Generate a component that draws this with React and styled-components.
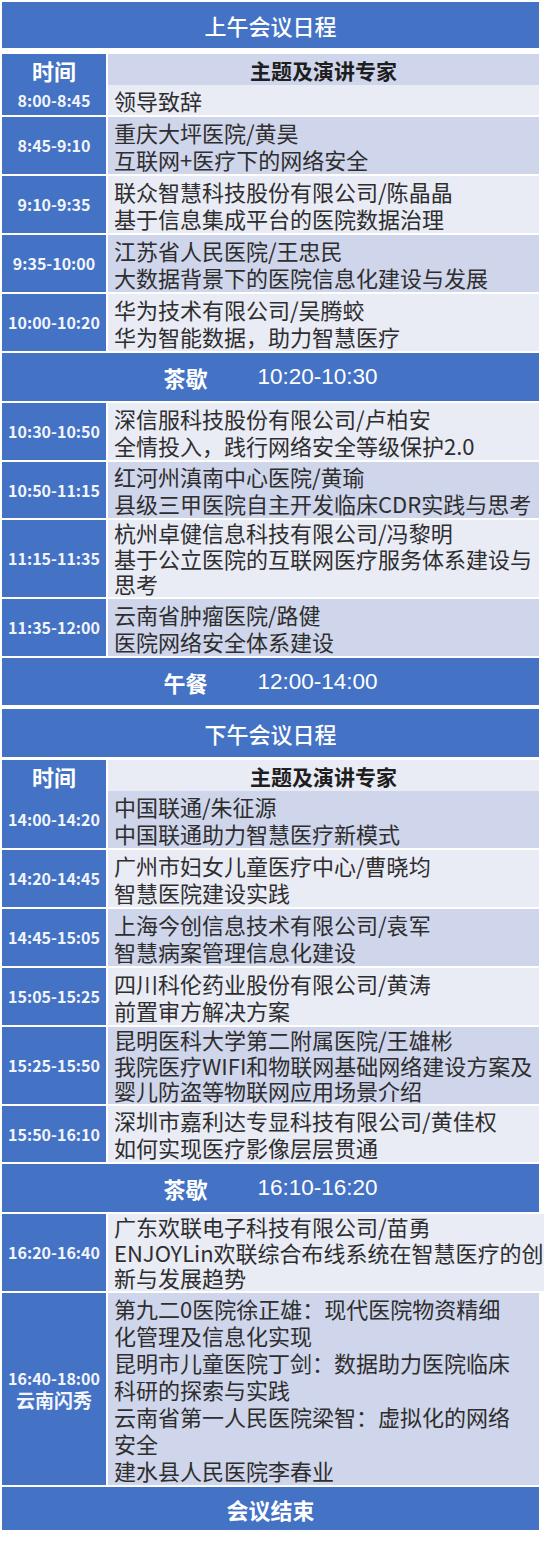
import React from 'react';
import styled, { createGlobalStyle } from 'styled-components';

const GlobalStyle = createGlobalStyle`
   html, body {
      margin: 0;
      padding: 0;
      background: #ffffff;
   }
   body {
      font-family: "Noto Sans CJK SC", "Liberation Sans", sans-serif;
   }
`;

const BLUE = '#4472c4';

const morning = [
   { time: '8:00-8:45', lines: ['领导致辞'], h: 30 },
   { time: '8:45-9:10', lines: ['重庆大坪医院/黄昊', '互联网+医疗下的网络安全'], h: 57, dark: true },
   { time: '9:10-9:35', lines: ['联众智慧科技股份有限公司/陈晶晶', '基于信息集成平台的医院数据治理'], h: 57 },
   { time: '9:35-10:00', lines: ['江苏省人民医院/王忠民', '大数据背景下的医院信息化建设与发展'], h: 57, dark: true },
   { time: '10:00-10:20', lines: ['华为技术有限公司/吴腾蛟', '华为智能数据，助力智慧医疗'], h: 57 },
];

const lateMorning = [
   { time: '10:30-10:50', lines: ['深信服科技股份有限公司/卢柏安', '全情投入，践行网络安全等级保护2.0'], h: 57 },
   { time: '10:50-11:15', lines: ['红河州滇南中心医院/黄瑜', '县级三甲医院自主开发临床CDR实践与思考'], h: 56, dark: true },
   { time: '11:15-11:35', lines: ['杭州卓健信息科技有限公司/冯黎明', '基于公立医院的互联网医疗服务体系建设与', '思考'], h: 77 },
   { time: '11:35-12:00', lines: ['云南省肿瘤医院/路健', '医院网络安全体系建设'], h: 57, dark: true },
];

const afternoon = [
   { time: '14:00-14:20', lines: ['中国联通/朱征源', '中国联通助力智慧医疗新模式'], h: 57, dark: true },
   { time: '14:20-14:45', lines: ['广州市妇女儿童医疗中心/曹晓均', '智慧医院建设实践'], h: 57 },
   { time: '14:45-15:05', lines: ['上海今创信息技术有限公司/袁军', '智慧病案管理信息化建设'], h: 57, dark: true },
   { time: '15:05-15:25', lines: ['四川科伦药业股份有限公司/黄涛', '前置审方解决方案'], h: 57 },
   {
      time: '15:25-15:50',
      lines: ['昆明医科大学第二附属医院/王雄彬', '我院医疗WIFI和物联网基础网络建设方案及', '婴儿防盗等物联网应用场景介绍'],
      h: 77,
      dark: true,
   },
   { time: '15:50-16:10', lines: ['深圳市嘉利达专显科技有限公司/黄佳权', '如何实现医疗影像层层贯通'], h: 56 },
];

const lateAfternoon = [
   {
      time: '16:20-16:40',
      lines: ['广东欢联电子科技有限公司/苗勇', 'ENJOYLin欢联综合布线系统在智慧医疗的创', '新与发展趋势'],
      h: 77,
   },
   {
      time: '16:40-18:00',
      sub: '云南闪秀',
      lines: [
         '第九二0医院徐正雄：现代医院物资精细',
         '化管理及信息化实现',
         '昆明市儿童医院丁剑：数据助力医院临床',
         '科研的探索与实践',
         '云南省第一人民医院梁智：虚拟化的网络',
         '安全',
         '建水县人民医院李春业',
      ],
      h: 192,
      dark: true,
   },
];

// three-line rows are packed a bit tighter than the others
const lineHeight = (item) => (item.lines.length === 3 ? 25.5 : 27);

const ScheduleRow = ({ item }) => (
   <Row $h={item.h}>
      <TimeCell>
         <span>{item.time}</span>
         {item.sub && <TimeSub>{item.sub}</TimeSub>}
      </TimeCell>
      <TopicCell $dark={item.dark} $lh={lineHeight(item)}>
         {item.lines.map((line) => (
            <Line key={line}>{line}</Line>
         ))}
      </TopicCell>
   </Row>
);

const HeaderRow = ({ dark, mt }) => (
   <Row $h={29} $mt={mt}>
      <HeadTime>时间</HeadTime>
      <HeadTopic $dark={dark}>主题及演讲专家</HeadTopic>
   </Row>
);

const App = () => (
   <>
      <GlobalStyle />
      <Page>
         <Band $h={46} $mt={0}>
            <BandTitle>上午会议日程</BandTitle>
         </Band>
         <HeaderRow dark mt={6} />
         {morning.map((item) => (
            <ScheduleRow key={item.time} item={item} />
         ))}
         <Band $h={48}>
            <BreakName>茶歇</BreakName>
            <BreakTime>10:20-10:30</BreakTime>
         </Band>
         {lateMorning.map((item) => (
            <ScheduleRow key={item.time} item={item} />
         ))}
         <Band $h={47}>
            <BreakName>午餐</BreakName>
            <BreakTime>12:00-14:00</BreakTime>
         </Band>
         <Band $h={48} $mt={4}>
            <BandTitle>下午会议日程</BandTitle>
         </Band>
         <HeaderRow mt={3} />
         {afternoon.map((item) => (
            <ScheduleRow key={item.time} item={item} />
         ))}
         <Band $h={48}>
            <BreakName>茶歇</BreakName>
            <BreakTime>16:10-16:20</BreakTime>
         </Band>
         {lateAfternoon.map((item) => (
            <ScheduleRow key={item.time} item={item} />
         ))}
         <Band $h={43}>
            <BreakName>会议结束</BreakName>
         </Band>
      </Page>
   </>
);

export default App;

const Page = styled.div`
   width: 537px;
   padding: 2px 0 8px 2px;
   display: flex;
   flex-direction: column;
`;

const Band = styled.div`
   height: ${(p) => p.$h}px;
   margin-top: ${(p) => (p.$mt === undefined ? 2 : p.$mt)}px;
   background: ${BLUE};
   color: #ffffff;
   display: flex;
   align-items: center;
   justify-content: center;
   gap: 50px;
   font-size: 22px;
`;

const BandTitle = styled.span`
   font-weight: 500;
`;

const BreakName = styled.span`
   font-weight: 700;
`;

const BreakTime = styled.span`
   font-family: "Liberation Sans", "Noto Sans CJK SC", sans-serif;
   font-size: 22.5px;
`;

const Row = styled.div`
   display: grid;
   grid-template-columns: 104px 1fr;
   column-gap: 2px;
   height: ${(p) => p.$h}px;
   margin-top: ${(p) => (p.$mt === undefined ? 2 : p.$mt)}px;
`;

const TimeCell = styled.div`
   background: ${BLUE};
   color: #f2f5fc;
   display: flex;
   flex-direction: column;
   align-items: center;
   justify-content: center;
   font-size: 16px;
   font-weight: 700;
   line-height: 21px;
   white-space: nowrap;
`;

const TimeSub = styled.span`
   font-size: 19px;
   line-height: 22px;
`;

const TopicCell = styled.div`
   background: ${(p) => (p.$dark ? '#cfd5ea' : '#e9ebf5')};
   color: #2e2e2e;
   display: flex;
   flex-direction: column;
   justify-content: center;
   padding-left: 6px;
   font-size: 22px;
   line-height: ${(p) => p.$lh}px;
   white-space: nowrap;
`;

const Line = styled.div``;

const HeadTime = styled.div`
   background: ${BLUE};
   color: #ffffff;
   display: flex;
   align-items: center;
   justify-content: center;
   font-size: 22px;
   font-weight: 700;
`;

const HeadTopic = styled.div`
   background: ${(p) => (p.$dark ? '#cfd5ea' : '#e9ebf5')};
   color: #1e1e1e;
   display: flex;
   align-items: center;
   justify-content: center;
   font-size: 21px;
   font-weight: 700;
`;
